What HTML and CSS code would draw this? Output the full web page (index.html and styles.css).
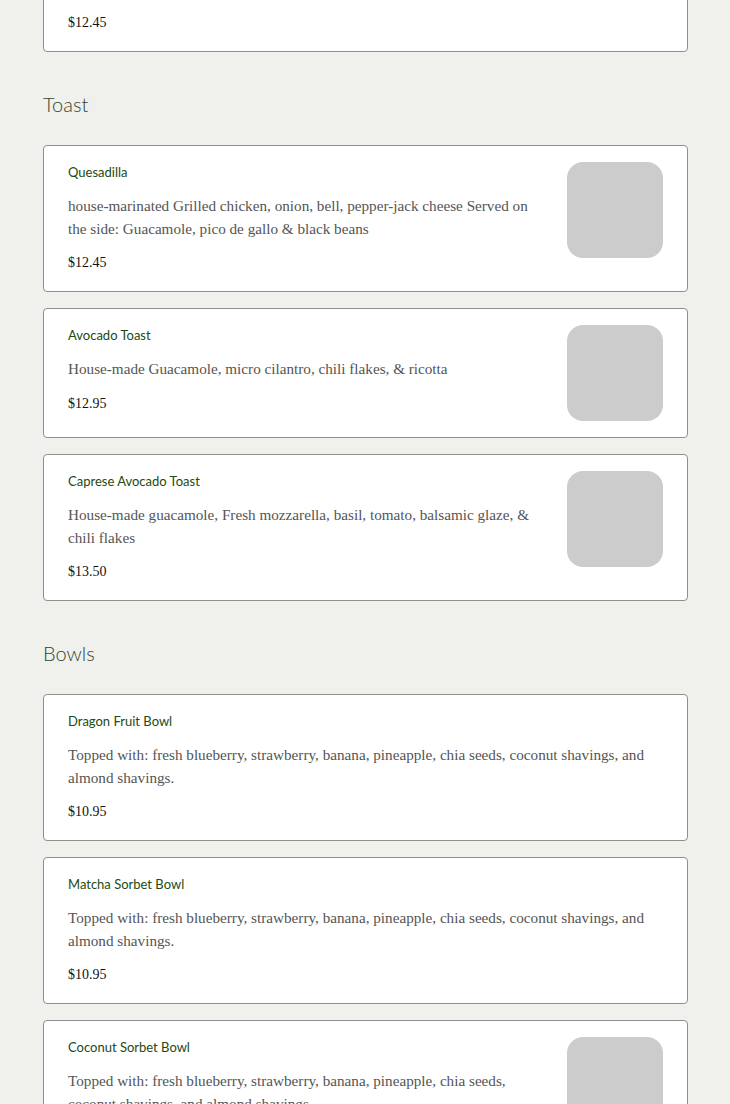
FILE: index.html
```html
<!DOCTYPE html>
<html lang="en">
<head>
<meta charset="utf-8">
<title>Menu</title>
<link rel="stylesheet" href="styles.css">
</head>
<body>
<main class="menu">
  <section class="section section-cut">
    <div class="card card-cut">
      <div class="card-text">
        <p class="price">$12.45</p>
      </div>
    </div>
  </section>

  <section class="section">
    <h2 class="section-title">Toast</h2>
    <div class="cards">
      <div class="card">
        <div class="card-text">
          <h3 class="item-name">Quesadilla</h3>
          <p class="item-desc">house-marinated Grilled chicken, onion, bell, pepper-jack cheese Served on the side: Guacamole, pico de gallo &amp; black beans</p>
          <p class="price">$12.45</p>
        </div>
        <div class="thumb"></div>
      </div>
      <div class="card">
        <div class="card-text">
          <h3 class="item-name">Avocado Toast</h3>
          <p class="item-desc">House-made Guacamole, micro cilantro, chili flakes, &amp; ricotta</p>
          <p class="price">$12.95</p>
        </div>
        <div class="thumb"></div>
      </div>
      <div class="card">
        <div class="card-text">
          <h3 class="item-name">Caprese Avocado Toast</h3>
          <p class="item-desc">House-made guacamole, Fresh mozzarella, basil, tomato, balsamic glaze, &amp; chili flakes</p>
          <p class="price">$13.50</p>
        </div>
        <div class="thumb"></div>
      </div>
    </div>
  </section>

  <section class="section">
    <h2 class="section-title">Bowls</h2>
    <div class="cards">
      <div class="card">
        <div class="card-text">
          <h3 class="item-name">Dragon Fruit Bowl</h3>
          <p class="item-desc">Topped with: fresh blueberry, strawberry, banana, pineapple, chia seeds, coconut shavings, and almond shavings.</p>
          <p class="price">$10.95</p>
        </div>
      </div>
      <div class="card">
        <div class="card-text">
          <h3 class="item-name">Matcha Sorbet Bowl</h3>
          <p class="item-desc">Topped with: fresh blueberry, strawberry, banana, pineapple, chia seeds, coconut shavings, and almond shavings.</p>
          <p class="price">$10.95</p>
        </div>
      </div>
      <div class="card">
        <div class="card-text">
          <h3 class="item-name">Coconut Sorbet Bowl</h3>
          <p class="item-desc">Topped with: fresh blueberry, strawberry, banana, pineapple, chia seeds, coconut shavings, and almond shavings.</p>
          <p class="price">$10.95</p>
        </div>
        <div class="thumb"></div>
      </div>
    </div>
  </section>
</main>
</body>
</html>
```
FILE: styles.css
```css
html, body {
  margin: 0;
  padding: 0;
  background: #f0f1ed;
}

.menu {
  padding: 0 42px 0 43px;
  display: flex;
  flex-direction: column;
}

.section {
  margin-top: 38px;
}

.section-cut {
  margin-top: -8px;
}

.section-title {
  margin: 0 0 27px;
  font-family: "Lato", "Open Sans", sans-serif;
  font-weight: 300;
  font-size: 20px;
  line-height: 28px;
  color: #33452a;
}

.cards {
  display: flex;
  flex-direction: column;
  gap: 16px;
}

.card {
  display: flex;
  gap: 24px;
  align-items: flex-start;
  padding: 16px 24px;
  background: #ffffff;
  border: 1px solid #8f8f8f;
  border-radius: 4px;
}

.card-text {
  flex: 1;
  min-width: 0;
}

.item-name {
  margin: 0;
  font-family: "Lato", "Open Sans", sans-serif;
  font-weight: 400;
  font-size: 13px;
  line-height: 20px;
  color: #234a12;
}

.item-desc {
  margin: 13px 0 0;
  font-family: "Liberation Serif", "DejaVu Serif", serif;
  font-size: 15.2px;
  line-height: 22.5px;
  color: #555555;
}

.price {
  margin: 10px 0 0;
  font-family: "Liberation Serif", serif;
  font-size: 14px;
  line-height: 25px;
  color: #111111;
}

.card-cut .price {
  margin-top: 1px;
}

.thumb {
  flex: none;
  width: 96px;
  height: 96px;
  border-radius: 16px;
  background: #cccccc;
}
```
